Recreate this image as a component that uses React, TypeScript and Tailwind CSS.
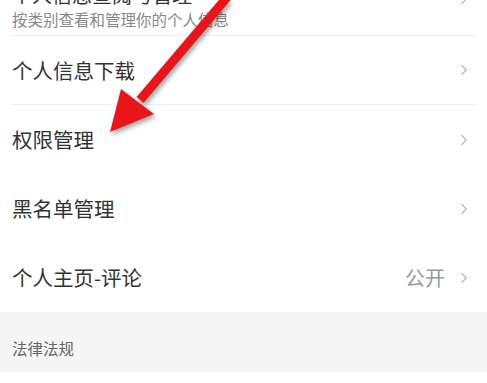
import { ChevronRight } from "lucide-react";

const ROWS = [
  { label: "个人信息下载", divider: true },
  { label: "权限管理", divider: false },
  { label: "黑名单管理", divider: false },
  { label: "个人主页-评论", value: "公开", divider: false },
];

const Chevron = () => (
  <ChevronRight className="w-[18px] h-[18px] text-[#b5b5b5] shrink-0" strokeWidth={1.5} />
);

export default function App() {
  return (
    <div
      className="relative w-[487px] h-[383px] overflow-hidden bg-white"
      style={{ fontFamily: '"Noto Sans CJK SC", "Noto Sans", sans-serif' }}
    >
      {/* first item, mostly scrolled out of view */}
      <div className="h-[36px] mx-[12px] border-b border-[#f0f0f0] flex items-end justify-between pb-[5px]">
        <div className="flex flex-col">
          <span className="text-[20px] leading-[26px] text-[#333]">个人信息查阅与管理</span>
          <span className="text-[15.5px] leading-[22px] text-[#888]">按类别查看和管理你的个人信息</span>
        </div>
        <div className="mb-[22px] mr-[2px]">
          <Chevron />
        </div>
      </div>

      {ROWS.map((row) => (
        <div
          key={row.label}
          className={`h-[69px] mx-[12px] flex items-center justify-between ${row.divider ? "border-b border-[#f0f0f0]" : ""}`}
        >
          <span className="text-[20.5px] text-[#333] leading-none">{row.label}</span>
          <div className="flex items-center gap-[10px] mr-[2px]">
            {row.value && <span className="text-[20px] text-[#999] leading-none">{row.value}</span>}
            <Chevron />
          </div>
        </div>
      ))}

      <div className="h-[60px] bg-[#f5f5f5] flex items-end px-[12px] pb-[16px]">
        <span className="text-[15.5px] text-[#666] leading-none">法律法规</span>
      </div>

      {/* red annotation arrow */}
      <svg
        className="absolute inset-0 pointer-events-none drop-shadow-[2px_3px_2px_rgba(0,0,0,0.35)]"
        width="487"
        height="383"
        viewBox="0 0 487 383"
      >
        <line x1="235" y1="-12" x2="140" y2="100" stroke="#e8161b" strokeWidth="9" strokeLinecap="butt" />
        <polygon points="110,132 121,89 154,114" fill="#e8161b" />
      </svg>
    </div>
  );
}
